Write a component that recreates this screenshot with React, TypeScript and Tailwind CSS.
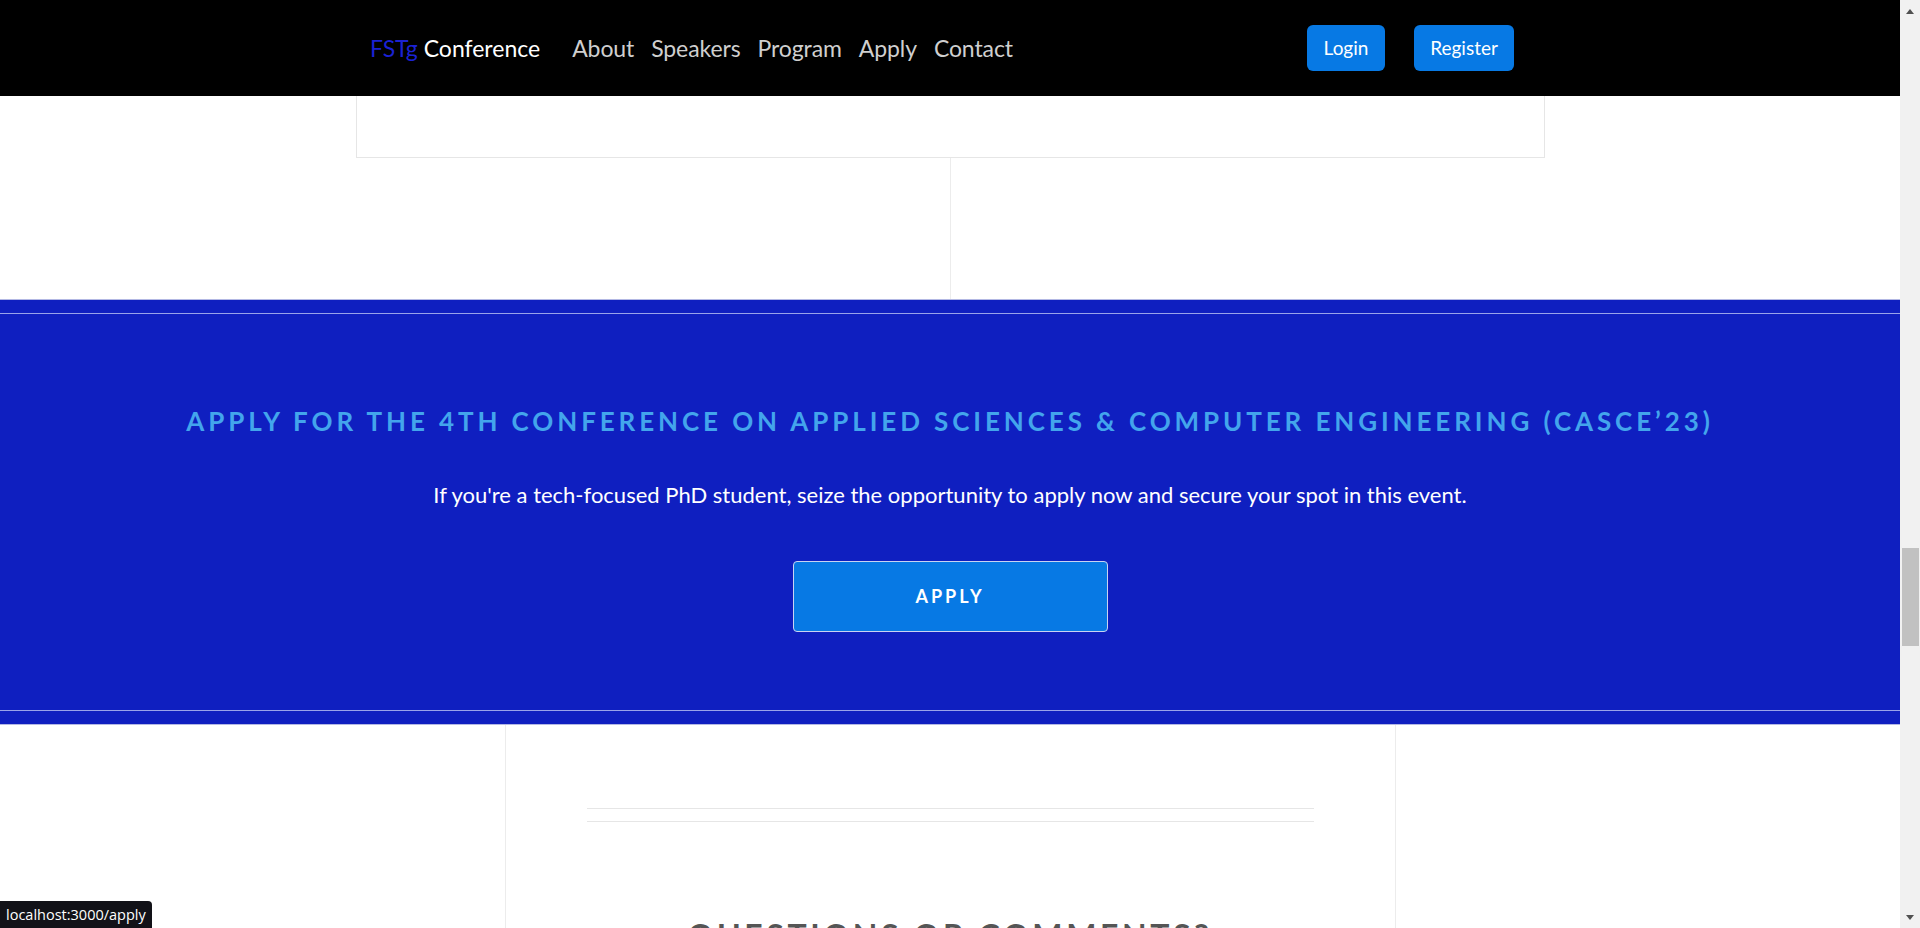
import React from 'react';

const navLinks = ['About', 'Speakers', 'Program', 'Apply', 'Contact'];

function Scrollbar() {
    return (
        <div className="w-[20px] shrink-0 bg-[#f1f1f1] flex flex-col items-center">
            <div className="h-[22px] flex items-center justify-center">
                <div className="w-0 h-0 border-x-[4px] border-x-transparent border-b-[5px] border-b-[#505050]" />
            </div>
            <div className="mt-[526px] w-[17px] h-[98px] bg-[#c1c1c1]" />
            <div className="mt-auto h-[22px] flex items-center justify-center">
                <div className="w-0 h-0 border-x-[4px] border-x-transparent border-t-[5px] border-t-[#505050]" />
            </div>
        </div>
    );
}

export default function App() {
    return (
        <div className="relative flex h-[928px] overflow-hidden bg-white font-['Lato',sans-serif]">
            <div className="flex-1 min-w-0 flex flex-col">
                {/* top navigation */}
                <nav className="h-[96px] shrink-0 bg-black">
                    <div className="w-[1160px] mx-auto h-full flex items-center">
                        <a className="text-[23px] leading-none whitespace-nowrap">
                            <span className="text-[#1b22d4]">FSTg</span>{' '}
                            <span className="text-white">Conference</span>
                        </a>
                        <ul className="flex items-center gap-[17px] ml-[32px]">
                            {navLinks.map((link) => (
                                <li key={link} className="text-[23px] leading-none text-[#cfcfcf] tracking-[-0.1px]">
                                    {link}
                                </li>
                            ))}
                        </ul>
                        <div className="ml-auto mr-[16px] flex items-center gap-[29px]">
                            <button className="h-[46px] w-[78px] rounded-[6px] bg-[#0779e4] text-white text-[19px]">Login</button>
                            <button className="h-[46px] w-[100px] rounded-[6px] bg-[#0779e4] text-white text-[19px]">Register</button>
                        </div>
                    </div>
                </nav>

                {/* end of the previous card */}
                <div className="w-[1189px] mx-auto h-[62px] shrink-0 border-x border-b border-[#e6e6e6]" />
                <div className="h-[141px] shrink-0 flex justify-center">
                    <div className="w-px h-full bg-[#ececec]" />
                </div>

                {/* apply banner */}
                <section className="h-[426px] shrink-0 bg-[#0f1fc0] border-y border-[#b3b8e4] py-[13px]">
                    <div className="h-full border-y border-[#9aa3ea] flex flex-col items-center">
                        <h2 className="mt-[89px] text-[26px] leading-[36px] font-bold uppercase tracking-[3.9px] text-[#43a5ec] whitespace-nowrap">
                            Apply for the 4th Conference on Applied Sciences &amp; Computer Engineering (CASCE’23)
                        </h2>
                        <p className="mt-[41px] text-[22px] leading-[30px] text-white whitespace-nowrap">
                            If you're a tech-focused PhD student, seize the opportunity to apply now and secure your spot in this event.
                        </p>
                        <a className="mt-[51px] w-[315px] h-[71px] flex items-center justify-center rounded-[4px] border border-[#c9d3f2] bg-[#0779e4] text-white text-[18px] font-bold tracking-[3px]">
                            APPLY
                        </a>
                    </div>
                </section>

                {/* contact card */}
                <div className="flex-1 w-[891px] mx-auto border-x border-[#ececec] flex flex-col items-center">
                    <div className="mt-[83px] w-[727px] h-[14px] border-y border-[#e6e6e6]" />
                    <h2 className="mt-[94px] text-[32px] leading-[40px] font-bold uppercase tracking-[3.6px] text-[#555555] whitespace-nowrap">
                        Questions or Comments?
                    </h2>
                </div>
            </div>

            <Scrollbar />

            {/* browser link preview */}
            <div className="absolute left-0 bottom-0 h-[27px] px-[6px] flex items-center rounded-tr-[4px] bg-[#121218] text-white text-[14.5px] font-['Open_Sans',sans-serif]">
                localhost:3000/apply
            </div>
        </div>
    );
}
